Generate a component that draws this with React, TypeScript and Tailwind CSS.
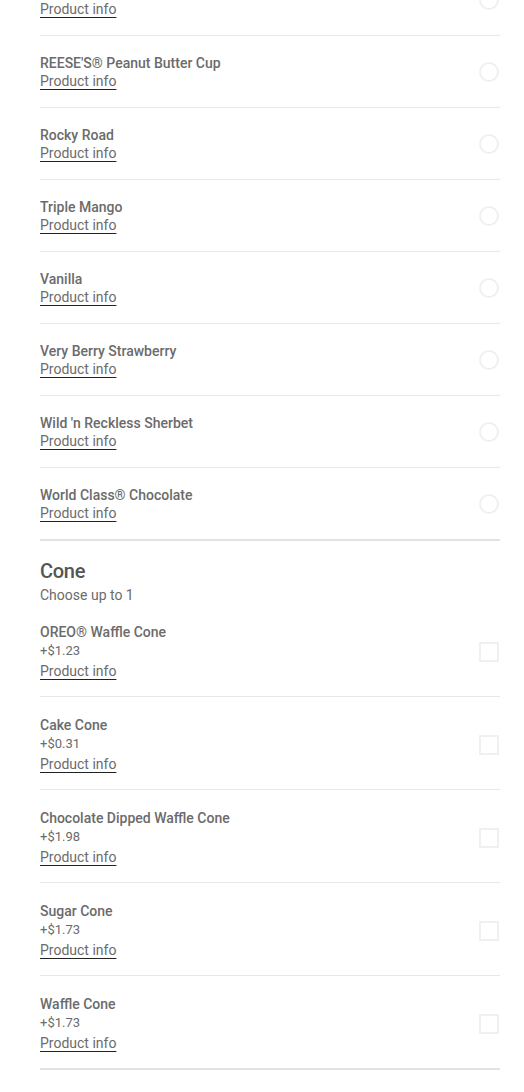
const flavors = [
  "Mint Chocolate Chip",
  "REESE'S® Peanut Butter Cup",
  "Rocky Road",
  "Triple Mango",
  "Vanilla",
  "Very Berry Strawberry",
  "Wild 'n Reckless Sherbet",
  "World Class® Chocolate",
];

const cones = [
  { name: "OREO® Waffle Cone", price: "+$1.23" },
  { name: "Cake Cone", price: "+$0.31" },
  { name: "Chocolate Dipped Waffle Cone", price: "+$1.98" },
  { name: "Sugar Cone", price: "+$1.73" },
  { name: "Waffle Cone", price: "+$1.73" },
];

const ProductInfo = () => (
  <span className="text-[14px] leading-[18px] text-[#6b6b6b] underline decoration-[#222] underline-offset-[3px] w-fit">
    Product info
  </span>
);

const App = (): JSX.Element => {
  return (
    <div
      className="bg-white min-h-[1092px] overflow-hidden px-[40px] w-[524px]"
      style={{ fontFamily: "Roboto, 'Liberation Sans', sans-serif" }}
    >
      <div className="w-[460px] -mt-[36px]">
        {flavors.map((name, i) => (
          <div
            key={name}
            className={`flex items-center justify-between pt-[18px] pb-[17px] ${
              i === flavors.length - 1 ? "border-b-2 border-[#e2e2e2]" : "border-b border-[#e8e8e8]"
            }`}
          >
            <div className="flex flex-col">
              <span className="text-[14px] leading-[18px] font-medium text-[#6b6b6b]">{name}</span>
              <ProductInfo />
            </div>
            <div className="w-[20px] h-[20px] rounded-full border-2 border-[#f0f0f0] mr-[1px]" />
          </div>
        ))}

        <div className="pt-[20px] flex flex-col">
          <span className="text-[20px] leading-[20px] font-medium text-[#555] tracking-[-0.3px]">Cone</span>
          <span className="text-[14px] leading-[18px] text-[#6b6b6b] mt-[5px]">Choose up to 1</span>
        </div>

        {cones.map((c, i) => (
          <div
            key={c.name}
            className={`flex items-center justify-between pt-[19px] pb-[16px] ${
              i === cones.length - 1 ? "border-b-2 border-[#e2e2e2]" : "border-b border-[#e8e8e8]"
            }`}
          >
            <div className="flex flex-col">
              <span className="text-[14px] leading-[18px] font-medium text-[#6b6b6b]">{c.name}</span>
              <span className="text-[13px] leading-[20px] text-[#6b6b6b]">{c.price}</span>
              <span className="mt-[1px] flex">
                <ProductInfo />
              </span>
            </div>
            <div className="w-[20px] h-[20px] border-2 border-[#f0f0f0] mr-[1px]" />
          </div>
        ))}
      </div>
    </div>
  );
};

export default App;
